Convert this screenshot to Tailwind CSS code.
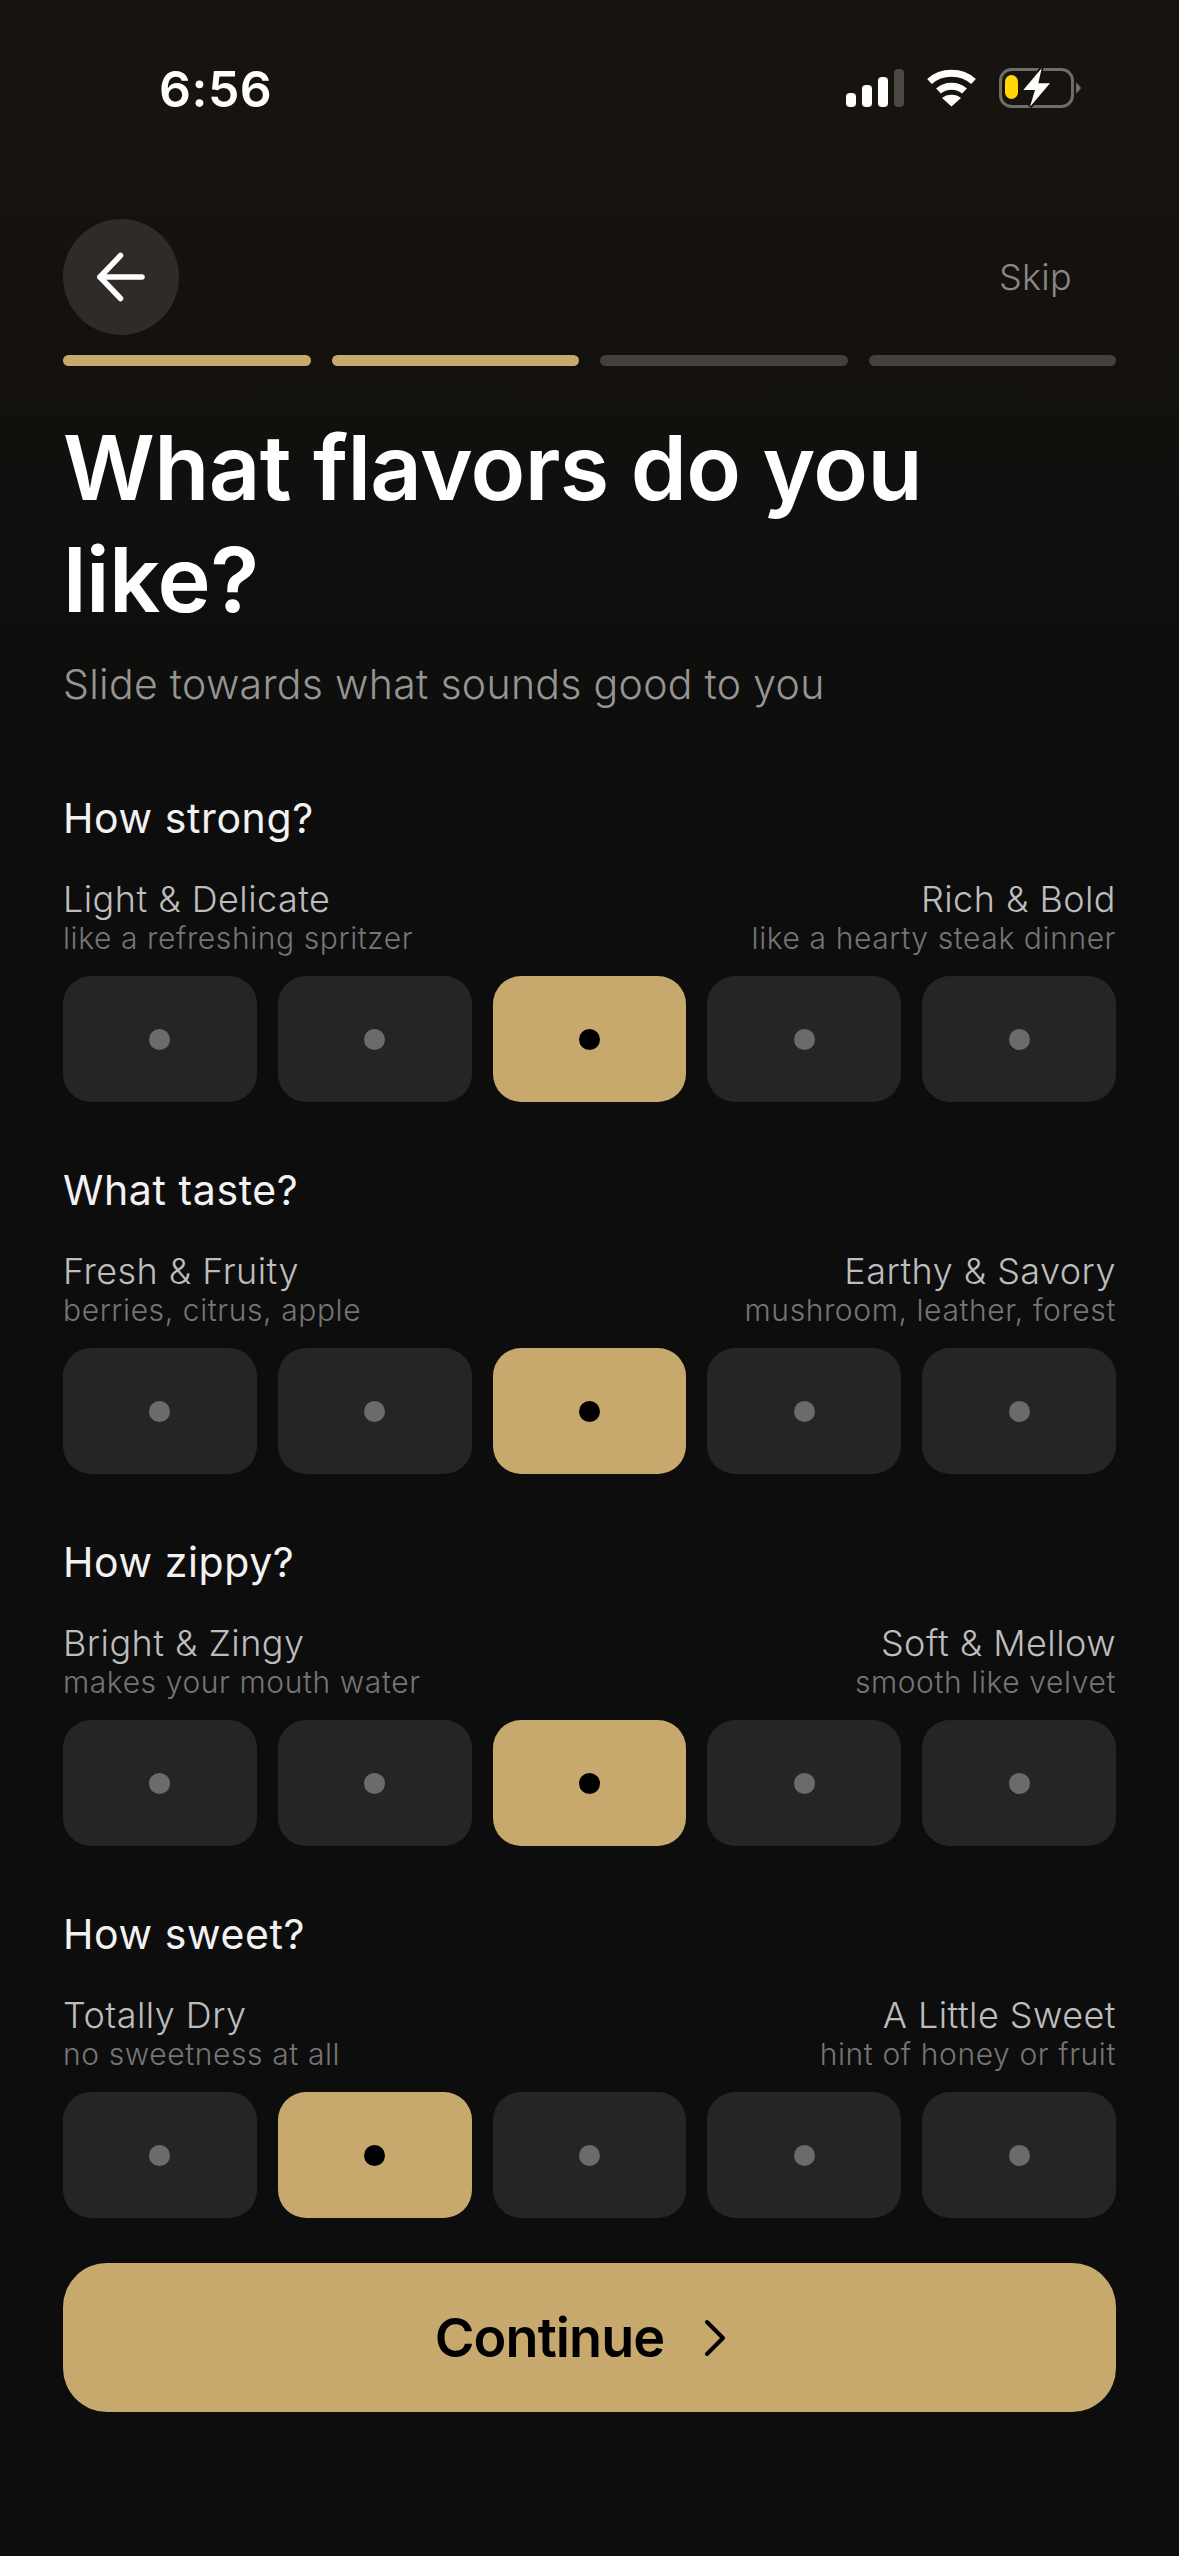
<!DOCTYPE html>
<html lang="en">
<head>
    <meta charset="UTF-8">
    <title>Flavors</title>
    <script src="https://cdn.jsdelivr.net/npm/@tailwindcss/browser@4"></script>
</head>
<body class="bg-[#0d0d0d]">
<div class="w-[1179px] h-[2556px] overflow-hidden bg-gradient-to-b from-[#17130e] from-[5%] to-[#0d0d0d] to-[30%] font-['Inter',sans-serif] text-white">

    <!-- Status bar -->
    <div class="h-[219px] pt-[62px] pl-[159px] pr-[98px] flex justify-between items-start">
        <div class="mt-[2px] text-[50px] leading-[50px] font-semibold tracking-[0.5px]">6:56</div>
        <div class="flex items-center mt-[5px]">
            <svg width="58" height="38" viewBox="0 0 58 38" fill="#fff">
                <rect x="0" y="24" width="10" height="14" rx="4"/>
                <rect x="16" y="16" width="10" height="22" rx="4"/>
                <rect x="32" y="8" width="10" height="30" rx="4"/>
                <rect x="48" y="0" width="10" height="38" rx="4" fill="#4a4845"/>
            </svg>
            <svg width="51" height="38" viewBox="0 0 50 38" fill="none" stroke="#fff" stroke-width="7" class="ml-[22px]">
                <path d="M3 12.5C15 1.5 35 1.5 47 12.5"/>
                <path d="M12 22C19 15.5 31 15.5 38 22"/>
                <path d="M25 37.5L15.5 29C20 24.5 30 24.5 34.500 29Z" fill="#fff" stroke="none"/>
            </svg>
            <svg width="82" height="42" viewBox="0 0 82 42" fill="none" class="ml-[22px]">
                <rect x="1.500" y="2.500" width="72" height="37" rx="11" stroke="#6f6d6a" stroke-width="3"/>
                <path d="M77 15L81 19.500C82 20.500 82 21.500 81 22.500L77 27Z" fill="#6f6d6a"/>
                <rect x="6" y="8" width="13" height="24" rx="6.500" fill="#ffd60a"/>
                <path d="M42.700 1.300L24.300 23H36L31 39.700L51 16.300H39.300Z" fill="#fff" stroke="#17130e" stroke-width="4" paint-order="stroke"/>
            </svg>
        </div>
    </div>

    <div class="px-[63px]">
        <!-- Top row -->
        <div class="h-[116px] flex items-center justify-between">
            <div class="w-[116px] h-[116px] rounded-full bg-[#2e2b28] flex items-center justify-center">
                <svg width="56" height="56" viewBox="0 0 56 56" fill="none" stroke="#fff" stroke-width="5.500" stroke-linecap="round" stroke-linejoin="round">
                    <path d="M49 28H7"/>
                    <path d="M27.500 6.500L7 28L27.500 49.500"/>
                </svg>
            </div>
            <div class="text-[36px] leading-[44px] font-light text-[#8a8886] pr-[44px] tracking-[0.3px]">Skip</div>
        </div>

        <!-- Progress -->
        <div class="mt-[20px] grid grid-cols-4 gap-[21px]">
            <div class="h-[11px] rounded-full bg-[#c7a86d]"></div>
            <div class="h-[11px] rounded-full bg-[#c7a86d]"></div>
            <div class="h-[11px] rounded-full bg-[#44403c]"></div>
            <div class="h-[11px] rounded-full bg-[#44403c]"></div>
        </div>

        <!-- Heading -->
        <h1 class="mt-[46px] text-[90px] leading-[112px] font-semibold tracking-[-0.6px]">What flavors do you like?</h1>
        <p class="mt-[20px] text-[41px] leading-[56px] font-light tracking-[0.3px] text-[#979592]">Slide towards what sounds good to you</p>

        <div id="sections"></div>

        <!-- Continue -->
        <div class="mt-[45px] h-[149px] rounded-[44px] bg-[#c7a86d] flex items-center justify-center gap-[38px] pr-[16px]">
            <span class="text-[54px] font-semibold tracking-[-0.9px] text-black">Continue</span>
            <svg width="26" height="38" viewBox="0 0 26 38" fill="none" stroke="#000" stroke-width="4" stroke-linecap="round" stroke-linejoin="round">
                <path d="M5 3L21 19L5 35"/>
            </svg>
        </div>
    </div>
</div>

<script>
    const sections = [
        { title: 'How strong?', left: 'Light &amp; Delicate', leftSub: 'like a refreshing spritzer', right: 'Rich &amp; Bold', rightSub: 'like a hearty steak dinner', picked: 2 },
        { title: 'What taste?', left: 'Fresh &amp; Fruity', leftSub: 'berries, citrus, apple', right: 'Earthy &amp; Savory', rightSub: 'mushroom, leather, forest', picked: 2 },
        { title: 'How zippy?', left: 'Bright &amp; Zingy', leftSub: 'makes your mouth water', right: 'Soft &amp; Mellow', rightSub: 'smooth like velvet', picked: 2 },
        { title: 'How sweet?', left: 'Totally Dry', leftSub: 'no sweetness at all', right: 'A Little Sweet', rightSub: 'hint of honey or fruit', picked: 1 },
    ];

    function renderStep(isPicked) {
        const box = isPicked ? 'bg-[#c7a86d]' : 'bg-[#252525]';
        const dot = isPicked ? 'bg-black' : 'bg-[#6b6b6b]';
        return `<div class="h-[126px] rounded-[28px] flex items-center justify-center ${box}"><div class="w-[21px] h-[21px] rounded-full ${dot}"></div></div>`;
    }

    document.getElementById('sections').innerHTML = sections.map((s, i) => `
        <section class="${i === 0 ? 'mt-[78px]' : 'mt-[60px]'}">
            <h2 class="text-[41px] leading-[56px] tracking-[0.6px] font-normal text-[#f2f2f2]">${s.title}</h2>
            <div class="mt-[31px] flex justify-between">
                <div>
                    <div class="text-[36px] leading-[44px] font-light tracking-[0.45px] text-[#bdbdbd]">${s.left}</div>
                    <div class="text-[30px] leading-[35px] font-light tracking-[0.6px] text-[#757575]">${s.leftSub}</div>
                </div>
                <div class="text-right">
                    <div class="text-[36px] leading-[44px] font-light tracking-[0.45px] text-[#bdbdbd]">${s.right}</div>
                    <div class="text-[30px] leading-[35px] font-light tracking-[0.6px] text-[#757575]">${s.rightSub}</div>
                </div>
            </div>
            <div class="mt-[20px] grid grid-cols-5 gap-[21px]">
                ${[0, 1, 2, 3, 4].map(n => renderStep(n === s.picked)).join('')}
            </div>
        </section>
    `).join('');
</script>
</body>
</html>
